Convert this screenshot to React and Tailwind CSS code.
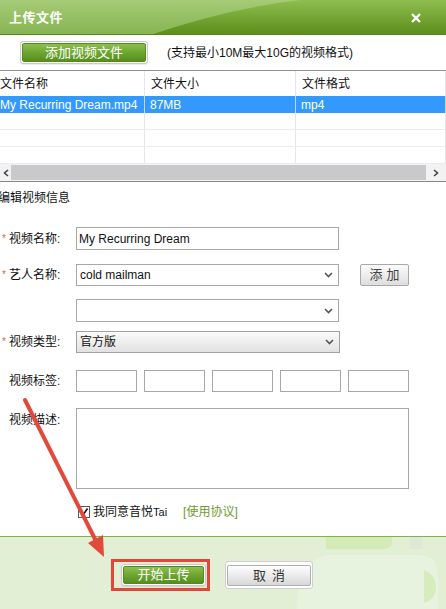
import { useState } from "react";

const FONT = { fontFamily: '"Liberation Sans", "Noto Sans CJK SC", sans-serif' };

function Chevron() {
  return (
    <svg width="9" height="6" viewBox="0 0 9 6" className="shrink-0">
      <path d="M1 1 L4.5 4.5 L8 1" fill="none" stroke="#555" strokeWidth="1.6" />
    </svg>
  );
}

function Label({ text, required }) {
  return (
    <div className="flex w-[76px] shrink-0 items-center pl-[2px] text-[12px] text-[#111]">
      <span className={`w-[7px] text-[10px] leading-none ${required ? "text-[#e0604a]" : "text-transparent"}`}>*</span>
      <span>{text}</span>
    </div>
  );
}

function GreenButton({ children, className }) {
  return (
    <div className={`rounded-[3px] border border-[#c9c9c9] bg-white p-[1px] shadow-[0_1px_1px_rgba(0,0,0,0.08)] ${className}`}>
      <button className="flex h-full w-full items-center justify-center rounded-[2px] border border-[#55891c] bg-gradient-to-b from-[#8cc04e] via-[#6ea632] to-[#568f1a] text-[13px] text-white">
        {children}
      </button>
    </div>
  );
}

function HeaderBg() {
  return (
    <svg className="absolute inset-0" width="446" height="35" viewBox="0 0 446 35">
      <defs>
        <linearGradient id="hdDark" x1="0" y1="0" x2="0" y2="1">
          <stop offset="0" stopColor="#8fbe50" />
          <stop offset="1" stopColor="#5b8d1a" />
        </linearGradient>
        <linearGradient id="hdLight" x1="0" y1="0" x2="0" y2="1">
          <stop offset="0" stopColor="#a5cb76" />
          <stop offset="1" stopColor="#86b452" />
        </linearGradient>
      </defs>
      <rect width="446" height="35" fill="url(#hdDark)" />
      <path d="M0 0 L300 0 Q230 8 150 35 L0 35 Z" fill="url(#hdLight)" />
      <rect y="34" width="446" height="1" fill="#58861c" />
    </svg>
  );
}

function FooterBg() {
  return (
    <svg className="absolute inset-0" width="446" height="75" viewBox="0 0 446 75">
      <rect width="446" height="75" fill="#e2efd5" />
      <path d="M296 75 Q300 22 326 18 L420 18 Q438 18 438 40 L438 75 Z" fill="#e7f2df" />
      <path d="M326 0 L392 0 L392 5 Q392 12 384 12 L326 12 Z" fill="#d4ebb7" />
      <rect x="410" y="0" width="12" height="12" fill="#dde9d6" />
      <path d="M424 33 Q436 38 436 50 Q436 62 424 66 Z" fill="#d6ecbc" />
    </svg>
  );
}

export default function App() {
  const [agree, setAgree] = useState(true);
  const cols = ["w-[145px]", "w-[151px]", "flex-1"];
  const emptyRows = [0, 1, 2];

  return (
    <div className="relative h-[609px] w-[446px] overflow-hidden bg-white" style={FONT}>
      {/* title bar */}
      <div className="relative flex h-[35px] items-center justify-between">
        <HeaderBg />
        <span className="relative pl-[9px] text-[13px] font-bold tracking-[0.5px] text-white">上传文件</span>
        <svg className="relative mr-[25px]" width="10" height="10" viewBox="0 0 10 10">
          <path d="M1 1 L9 9 M9 1 L1 9" stroke="#fff" strokeWidth="2.4" />
        </svg>
      </div>

      {/* add file toolbar */}
      <div className="flex h-[35px] items-center pl-[20px]">
        <GreenButton className="h-[23px] w-[128px]">添加视频文件</GreenButton>
        <span className="ml-[19px] text-[12px] text-[#111]">(支持最小10M最大10G的视频格式)</span>
      </div>

      {/* file list */}
      <div className="border-t border-b border-t-[#8f8f8f] border-b-[#8a8a8a] text-[12px]">
        <div className="flex h-[25px] items-center text-[#111]">
          {["文件名称", "文件大小", "文件格式"].map((t, i) => (
            <div key={t} className={`${cols[i]} flex h-full items-center border-r border-[#e6e6ee] ${i ? "pl-[6px]" : ""}`}>
              {t}
            </div>
          ))}
        </div>
        <div className="flex h-[17px] items-center bg-[#3399fe] text-white">
          {["My Recurring Dream.mp4", "87MB", "mp4"].map((t, i) => (
            <div key={t} className={`${cols[i]} flex h-full items-center border-r border-[#bcd9fb] ${i ? "pl-[5px]" : ""}`}>
              {t}
            </div>
          ))}
        </div>
        {emptyRows.map((r) => (
          <div key={r} className="flex h-[17px] border-b border-[#ececf0]">
            {cols.map((c, i) => (
              <div key={i} className={`${c} h-full border-r border-[#e6e6ee]`} />
            ))}
          </div>
        ))}
        <div className="flex h-[17px] items-center bg-[#f2f2f2]">
          <div className="flex w-[11px] items-center justify-center">
            <svg width="6" height="8" viewBox="0 0 6 8">
              <path d="M5 1 L1.5 4 L5 7" fill="none" stroke="#444" strokeWidth="1.6" />
            </svg>
          </div>
          <div className="h-[15px] flex-1 bg-[#c9c9cc]" />
          <div className="flex w-[20px] items-center justify-center">
            <svg width="6" height="8" viewBox="0 0 6 8">
              <path d="M1 1 L4.5 4 L1 7" fill="none" stroke="#444" strokeWidth="1.6" />
            </svg>
          </div>
        </div>
      </div>

      {/* edit info form */}
      <div className="mt-[8px] h-[16px] -ml-[2px] text-[12px] leading-[16px] text-[#111]">编辑视频信息</div>

      <div className="mt-[21px] flex h-[23px] items-center">
        <Label text="视频名称:" required />
        <div className="flex h-[23px] w-[263px] items-center border border-[#a8a8a8] px-[2px] text-[12px] text-[#111]">
          My Recurring Dream
        </div>
      </div>

      <div className="mt-[14px] flex h-[22px] items-center">
        <Label text="艺人名称:" required />
        <div className="flex h-[22px] w-[263px] items-center justify-between border border-[#a8a8a8] pl-[3px] pr-[5px] text-[12px] text-[#111]">
          <span>cold mailman</span>
          <Chevron />
        </div>
        <button className="ml-[21px] h-[22px] w-[49px] rounded-[2px] border border-[#a9a9a9] bg-gradient-to-b from-[#fbfbfb] to-[#dedede] text-[13px] tracking-[4px] pl-[4px] text-[#444]">
          添加
        </button>
      </div>

      <div className="mt-[13px] flex h-[23px] items-center">
        <div className="w-[76px] shrink-0" />
        <div className="flex h-[23px] w-[263px] items-center justify-end border border-[#a8a8a8] pr-[5px]">
          <Chevron />
        </div>
      </div>

      <div className="mt-[9px] flex h-[22px] items-center">
        <Label text="视频类型:" required />
        <div className="flex h-[22px] w-[264px] items-center justify-between border border-[#a3a3a3] bg-gradient-to-b from-[#fafafa] to-[#e2e2e2] pl-[3px] pr-[5px] text-[12px] text-[#111]">
          <span>官方版</span>
          <Chevron />
        </div>
      </div>

      <div className="mt-[17px] flex h-[22px] items-center">
        <Label text="视频标签:" />
        <div className="flex gap-[7px]">
          {[0, 1, 2, 3, 4].map((k) => (
            <div key={k} className="h-[22px] w-[61px] border border-[#a8a8a8]" />
          ))}
        </div>
      </div>

      <div className="mt-[16px] flex">
        <div className="pt-[3px]">
          <Label text="视频描述:" />
        </div>
        <div className="h-[81px] w-[333px] border border-[#a8a8a8]" />
      </div>

      <div className="mt-[16px] flex h-[14px] items-center pl-[78px] text-[12px]">
        <button
          onClick={() => setAgree((a) => !a)}
          className="flex h-[12px] w-[12px] items-center justify-center border border-[#555] bg-white"
        >
          {agree && (
            <svg width="10" height="10" viewBox="0 0 10 10">
              <path d="M2 5.5 L4 8 L8.5 1.5" fill="none" stroke="#111" strokeWidth="1.6" />
            </svg>
          )}
        </button>
        <span className="ml-[3px] text-[#111]">
          我同意音悦<span className="text-[11px]">Tai</span>
        </span>
        <span className="ml-[16px] text-[#6e9a2e]">[使用协议]</span>
      </div>

      {/* footer actions */}
      <div className="relative mt-[17px] h-[75px] border-t border-[#82b04c]">
        <FooterBg />
        <div className="relative flex items-center pl-[111px] pt-[22px]">
          <div className="border-[3px] border-[#e0463a] p-[2px] pl-[7px] pr-[1px]">
            <GreenButton className="h-[22px] w-[85px]">开始上传</GreenButton>
          </div>
          <div className="ml-[15px] rounded-[3px] border border-[#cfcfcf] bg-white p-[1px]">
            <button className="h-[21px] w-[84px] rounded-[2px] border border-[#b0b0b0] bg-gradient-to-b from-[#fefefe] to-[#d8d8d8] text-[13px] tracking-[6px] pl-[6px] text-[#333]">
              取消
            </button>
          </div>
        </div>
      </div>

      {/* pointer arrow drawn over the form */}
      <svg className="pointer-events-none absolute left-0 top-0" width="446" height="609" viewBox="0 0 446 609">
        <line x1="25" y1="400" x2="97" y2="543" stroke="#e2493b" strokeWidth="4" strokeLinecap="round" />
        <path d="M104 557 L103 535 L88 543 Z" fill="#e2493b" />
      </svg>
    </div>
  );
}
